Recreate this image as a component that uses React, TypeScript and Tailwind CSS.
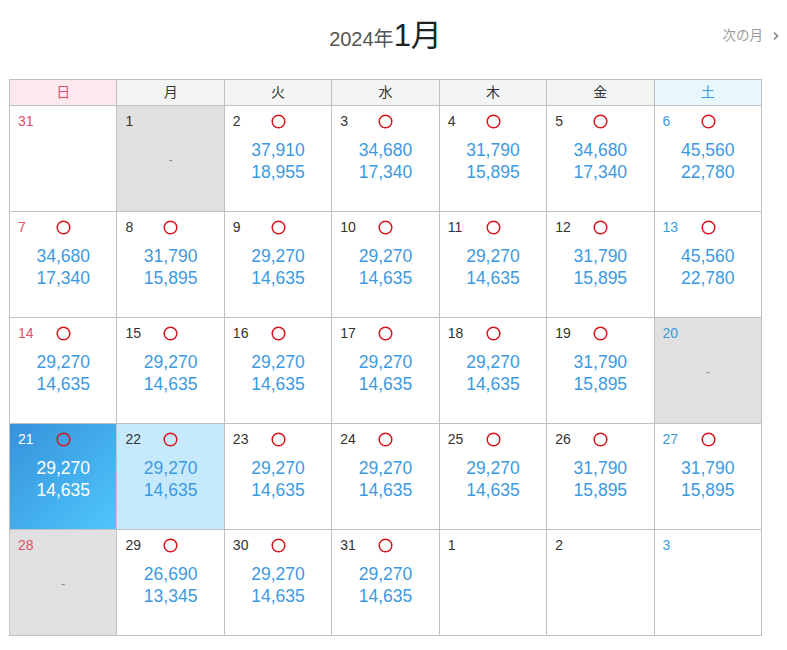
import React from "react";

type Cell = {
  d: number;
  kind: "sun" | "sat" | "day";
  prices?: [string, string];
  gray?: boolean;
  sel?: "dark" | "light";
};

const rows: Cell[][] = [
  [
    { d: 31, kind: "sun" },
    { d: 1, kind: "day", gray: true },
    { d: 2, kind: "day", prices: ["37,910", "18,955"] },
    { d: 3, kind: "day", prices: ["34,680", "17,340"] },
    { d: 4, kind: "day", prices: ["31,790", "15,895"] },
    { d: 5, kind: "day", prices: ["34,680", "17,340"] },
    { d: 6, kind: "sat", prices: ["45,560", "22,780"] },
  ],
  [
    { d: 7, kind: "sun", prices: ["34,680", "17,340"] },
    { d: 8, kind: "day", prices: ["31,790", "15,895"] },
    { d: 9, kind: "day", prices: ["29,270", "14,635"] },
    { d: 10, kind: "day", prices: ["29,270", "14,635"] },
    { d: 11, kind: "day", prices: ["29,270", "14,635"] },
    { d: 12, kind: "day", prices: ["31,790", "15,895"] },
    { d: 13, kind: "sat", prices: ["45,560", "22,780"] },
  ],
  [
    { d: 14, kind: "sun", prices: ["29,270", "14,635"] },
    { d: 15, kind: "day", prices: ["29,270", "14,635"] },
    { d: 16, kind: "day", prices: ["29,270", "14,635"] },
    { d: 17, kind: "day", prices: ["29,270", "14,635"] },
    { d: 18, kind: "day", prices: ["29,270", "14,635"] },
    { d: 19, kind: "day", prices: ["31,790", "15,895"] },
    { d: 20, kind: "sat", gray: true },
  ],
  [
    { d: 21, kind: "sun", prices: ["29,270", "14,635"], sel: "dark" },
    { d: 22, kind: "day", prices: ["29,270", "14,635"], sel: "light" },
    { d: 23, kind: "day", prices: ["29,270", "14,635"] },
    { d: 24, kind: "day", prices: ["29,270", "14,635"] },
    { d: 25, kind: "day", prices: ["29,270", "14,635"] },
    { d: 26, kind: "day", prices: ["31,790", "15,895"] },
    { d: 27, kind: "sat", prices: ["31,790", "15,895"] },
  ],
  [
    { d: 28, kind: "sun", gray: true },
    { d: 29, kind: "day", prices: ["26,690", "13,345"] },
    { d: 30, kind: "day", prices: ["29,270", "14,635"] },
    { d: 31, kind: "day", prices: ["29,270", "14,635"] },
    { d: 1, kind: "day" },
    { d: 2, kind: "day" },
    { d: 3, kind: "sat" },
  ],
];

const heads = ["日", "月", "火", "水", "木", "金", "土"];

function Circle() {
  return (
    <svg width="15" height="15" viewBox="0 0 15 15" className="block">
      <circle cx="7.5" cy="7.5" r="6.3" fill="none" stroke="#d9151c" strokeWidth="1.5" />
    </svg>
  );
}

function DayCell({ c }: { c: Cell }) {
  let bg = "bg-white";
  if (c.gray) bg = "bg-[#e0e0e0]";
  if (c.sel === "dark") bg = "bg-gradient-to-br from-[#3792dc] to-[#4fc6fb]";
  if (c.sel === "light") bg = "bg-[#c6eafc]";
  let numColor = "text-[#333333]";
  if (c.kind === "sun") numColor = "text-[#e0506a]";
  if (c.kind === "sat") numColor = "text-[#3d9ae0]";
  if (c.sel === "dark") numColor = "text-white";
  const priceColor = c.sel === "dark" ? "text-white" : "text-[#3d9ae0]";
  return (
    <div className={`h-[106px] border-r border-b border-[#c0c0c6] ${bg} relative`}>
      <div className="flex items-center h-[18px] mt-[6px] pl-[8px]">
        <span className={`text-[14px] leading-[18px] ${numColor} w-[38px]`}>{c.d}</span>
        {c.prices && <Circle />}
      </div>
      {c.prices && (
        <div className={`mt-[9px] text-center text-[17.5px] leading-[22px] ${priceColor}`}>
          <div>{c.prices[0]}</div>
          <div>{c.prices[1]}</div>
        </div>
      )}
      {c.gray && (
        <div className="absolute left-0 right-0 top-[45px] text-center text-[12px] text-[#888888]">-</div>
      )}
    </div>
  );
}

export default function App() {
  return (
    <div
      className="w-[787px] h-[650px] bg-white"
      style={{ fontFamily: '"Liberation Sans", Arial, "Noto Sans CJK JP", sans-serif' }}
    >
      <div className="relative h-[79px] ml-[9px] w-[753px]">
        <div className="pt-[19px] flex items-end justify-center">
          <span className="text-[20px] leading-[24px] text-[#555555] mb-[2px]">2024年</span>
          <span className="text-[31px] leading-[34px] text-[#222222]">1月</span>
        </div>
        <div className="absolute right-[-20px] top-[26px] flex items-center text-[13.5px] text-[#999999]">
          <span>次の月</span>
          <svg width="12" height="12" viewBox="0 0 12 12" className="ml-[7px]">
            <path d="M4 2.5 L7.5 6 L4 9.5" fill="none" stroke="#888" strokeWidth="1.7" />
          </svg>
        </div>
      </div>
      <div className="ml-[9px] w-[753px] border-l border-t border-[#c0c0c6]">
        <div className="grid grid-cols-7">
          {heads.map((h, i) => (
            <div
              key={h}
              className={`h-[26px] border-r border-b border-[#c0c0c6] flex items-center justify-center text-[14px] ${
                i === 0
                  ? "bg-[#fbe9ee] text-[#e0506a]"
                  : i === 6
                  ? "bg-[#e8f7fd] text-[#3d9ae0]"
                  : "bg-[#f3f4f4] text-[#333333]"
              }`}
            >
              {h}
            </div>
          ))}
        </div>
        {rows.map((r, ri) => (
          <div key={ri} className="grid grid-cols-7">
            {r.map((c, ci) => (
              <DayCell key={ci} c={c} />
            ))}
          </div>
        ))}
      </div>
    </div>
  );
}
